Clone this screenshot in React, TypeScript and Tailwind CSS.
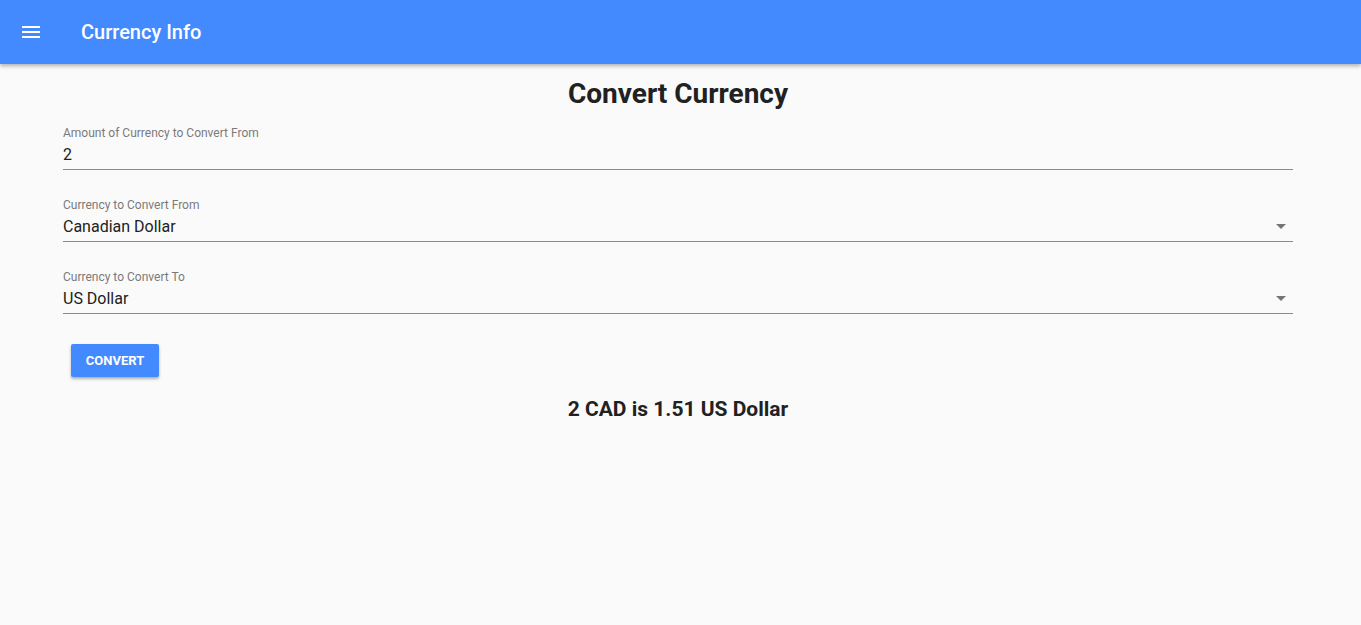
import React from "react";

function Field({ label, value, select }: { label: string; value: string; select?: boolean }) {
  return (
    <div className="flex flex-col">
      <div className="text-[12px] leading-[14px] text-[#7a7a7a]">{label}</div>
      <div className="flex items-center justify-between h-[30px] border-b border-[#8a8a8a]">
        <span className="text-[16px] text-[#212121] pt-[1px]">{value}</span>
        {select && (
          <svg width="10" height="5" viewBox="0 0 10 5" className="mr-[7px]">
            <path d="M0 0 L10 0 L5 5 Z" fill="#757575" />
          </svg>
        )}
      </div>
    </div>
  );
}

export default function App() {
  return (
    <div className="min-h-[625px] bg-[#fafafa]" style={{ fontFamily: "Roboto, 'Noto Sans', sans-serif" }}>
      <header className="h-[64px] bg-[#448aff] flex items-center shadow-[0_2px_4px_rgba(0,0,0,0.3)] relative z-10">
        <div className="w-[81px] flex items-center pl-[22px]">
          <svg width="18" height="12" viewBox="0 0 18 12">
            <rect x="0" y="0" width="18" height="2" fill="white" />
            <rect x="0" y="5" width="18" height="2" fill="white" />
            <rect x="0" y="10" width="18" height="2" fill="white" />
          </svg>
        </div>
        <div className="text-white text-[20px] font-medium">Currency Info</div>
      </header>
      <main className="pl-[63px] pr-[68px]">
        <h1 className="text-center text-[28px] font-bold text-[#212121] pt-[12px] leading-[36px]">Convert Currency</h1>
        <div className="flex flex-col gap-[28px] mt-[14px]">
          <Field label="Amount of Currency to Convert From" value="2" />
          <Field label="Currency to Convert From" value="Canadian Dollar" select />
          <Field label="Currency to Convert To" value="US Dollar" select />
        </div>
        <div className="pl-[8px] mt-[30px]">
          <button className="h-[33px] w-[88px] bg-[#448aff] text-white text-[13px] font-bold rounded-[2px] shadow-[0_2px_3px_rgba(0,0,0,0.3)]">
            CONVERT
          </button>
        </div>
        <div className="text-center text-[21px] font-bold text-[#212121] mt-[17px] leading-[30px]">2 CAD is 1.51 US Dollar</div>
      </main>
    </div>
  );
}
